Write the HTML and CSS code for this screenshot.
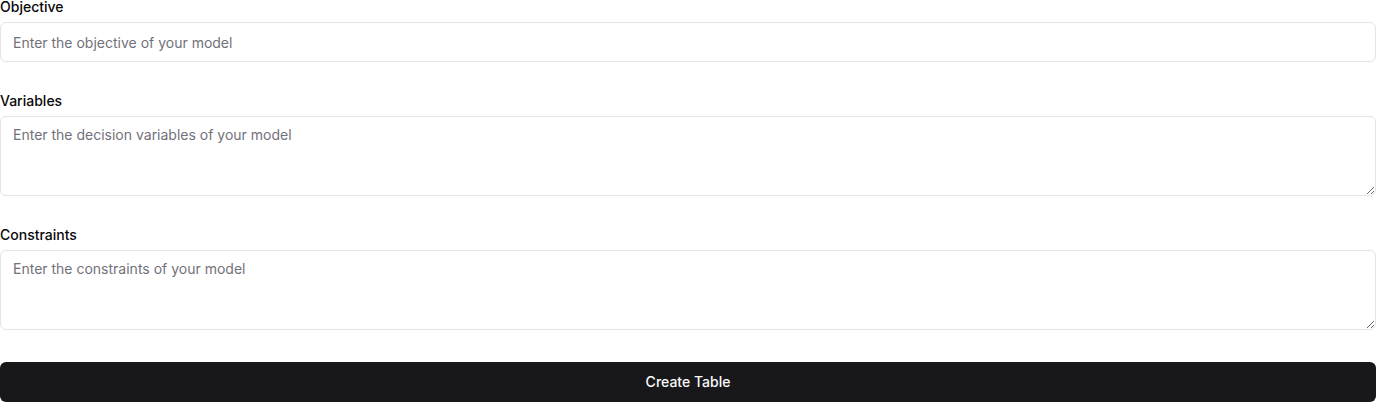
FILE: index.html
```html
<!DOCTYPE html>
<html lang="en">
<head>
<meta charset="utf-8">
<title>Model</title>
<link rel="stylesheet" href="styles.css">
</head>
<body>
<form class="form">
  <div class="field">
    <label class="label" for="objective">Objective</label>
    <input class="input" id="objective" type="text" placeholder="Enter the objective of your model">
  </div>
  <div class="field">
    <label class="label" for="variables">Variables</label>
    <textarea class="textarea" id="variables" placeholder="Enter the decision variables of your model"></textarea>
  </div>
  <div class="field">
    <label class="label" for="constraints">Constraints</label>
    <textarea class="textarea" id="constraints" placeholder="Enter the constraints of your model"></textarea>
  </div>
  <button class="button" type="button">Create Table</button>
</form>
</body>
</html>
```
FILE: styles.css
```css
* { box-sizing: border-box; }
html, body { margin: 0; padding: 0; background: #ffffff; }
body {
  font-family: Inter, "Liberation Sans", sans-serif;
  color: #09090b;
}
.form {
  display: flex;
  flex-direction: column;
  gap: 32px;
  width: 1376px;
}
.field {
  display: flex;
  flex-direction: column;
  gap: 8px;
}
.label {
  font-size: 14px;
  font-weight: 500;
  line-height: 14px;
  height: 14px;
  color: #09090b;
}
.input, .textarea {
  width: 100%;
  border: 1px solid #e4e4e7;
  border-radius: 6px;
  background: #ffffff;
  padding: 8px 12px;
  font-family: inherit;
  font-size: 14px;
  line-height: 20px;
  color: #09090b;
  outline: none;
  margin: 0;
}
.input { height: 40px; }
.textarea { height: 80px; min-height: 80px; resize: vertical; display: block; }
.input::placeholder, .textarea::placeholder { color: #71717a; opacity: 1; }
.button {
  display: flex;
  align-items: center;
  justify-content: center;
  height: 40px;
  width: 100%;
  border: none;
  border-radius: 6px;
  background: #18181b;
  color: #fafafa;
  font-family: inherit;
  font-size: 14px;
  font-weight: 500;
  line-height: 20px;
  padding: 0 16px 1px;
  margin: 0;
}
```
